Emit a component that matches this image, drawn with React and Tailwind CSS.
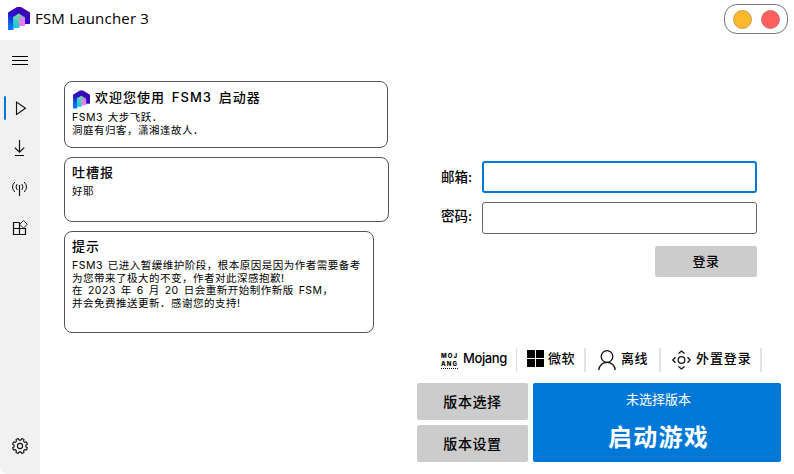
import React from "react";

const hand = "font-['Inter','Noto_Sans_CJK_SC',sans-serif]";

function Logo({ className, id }) {
  return (
    <svg viewBox="0 0 22 23" className={className}>
      <defs>
        <linearGradient id={id + "a"} x1="0" y1="1" x2="0.6" y2="0.1">
          <stop offset="0" stopColor="#0080ff" />
          <stop offset="0.25" stopColor="#0868f4" />
          <stop offset="0.6" stopColor="#2a10cc" />
          <stop offset="1" stopColor="#3d00b4" />
        </linearGradient>
        <linearGradient id={id + "b"} x1="0" y1="1" x2="0.3" y2="0">
          <stop offset="0" stopColor="#08c4e4" />
          <stop offset="0.5" stopColor="#38ccc8" />
          <stop offset="1" stopColor="#78dc9c" />
        </linearGradient>
        <linearGradient id={id + "c"} x1="0" y1="0" x2="0.2" y2="1">
          <stop offset="0" stopColor="#78d0a8" />
          <stop offset="0.35" stopColor="#a0a8c8" />
          <stop offset="0.65" stopColor="#e880f0" />
          <stop offset="1" stopColor="#ff78f0" />
        </linearGradient>
      </defs>
      <path d="M0 5.500 9 0H13L22 5.500V17H16V11H5.500V23H0Z" fill={`url(#${id}a)`} />
      <path d="M5 10 11 6.500 11.500 7V21H5Z" fill={`url(#${id}b)`} />
      <path d="M11 6.500 17 10.500V19H11Z" fill={`url(#${id}c)`} />
    </svg>
  );
}

function Icon({ children, className }) {
  return (
    <svg viewBox="0 0 20 20" fill="none" stroke="#111" strokeWidth="1.1" className={className}>
      {children}
    </svg>
  );
}

function Gear() {
  const points = [];
  for (let i = 0; i < 8; i++) {
    for (const [offset, radius] of [[-15, 5.9], [-9, 7.6], [9, 7.6], [15, 5.9]]) {
      const angle = ((i * 45 + 22.5 + offset) * Math.PI) / 180;
      points.push(`${10 + radius * Math.cos(angle)},${10 + radius * Math.sin(angle)}`);
    }
  }
  return (
    <Icon className="h-5 w-5">
      <polygon points={points.join(" ")} strokeLinejoin="round" />
      <circle cx="10" cy="10" r="2.6" />
    </Icon>
  );
}

function Sidebar() {
  return (
    <aside className="flex w-10 flex-col items-center rounded-bl-lg bg-[#f1f1f1] pt-[10px] pb-[18px]">
      <Icon className="h-5 w-5">
        <path d="M2 6.5H18M2 10.5H18M2 14.5H18" stroke="#000" strokeWidth="1" />
      </Icon>
      <div className="mt-[26px] flex h-6 w-full items-center pl-1">
        <span className="h-6 w-[2px] rounded bg-[#0078d7]" />
        <Icon className="ml-1 h-5 w-5">
          <path d="M6.5 4V16.5L15.5 10.2Z" />
        </Icon>
      </div>
      <Icon className="mt-[18px] h-5 w-5">
        <path d="M9.5 2V14M4.8 9.6 9.5 14.2 14.2 9.6M5 17.5H14" strokeWidth="1.2" />
      </Icon>
      <Icon className="mt-5 h-5 w-5">
        <path d="M9.5 7V18" strokeWidth="1.2" />
        <path d="M7.200 6Q4.800 9 7.200 12M11.800 6Q14.200 9 11.800 12M4.800 4Q.200 9 4.800 14M14.200 4Q18.800 9 14.200 14" strokeWidth="1" />
      </Icon>
      <Icon className="mt-5 h-5 w-5">
        <path d="M9.500 4.500H3.500V16.500H15.500V10.500H3.500M9.500 4.500V16.500" strokeWidth="1.2" />
        <path d="M13.500 2.500 17.300 6.300 13.500 10.100 9.700 6.300Z" fill="#f1f1f1" strokeWidth=".9" />
      </Icon>
      <div className="mt-auto">
        <Gear />
      </div>
    </aside>
  );
}

function Card({ className, title, icon, children }) {
  return (
    <section className={`rounded-lg border border-[#555] pl-[7px] ${className}`}>
      <h2 className="flex h-[28px] items-center text-[13px] font-medium leading-none tracking-[1px] [word-spacing:2.4px] whitespace-pre">
        {icon}
        {title}
      </h2>
      <div className="text-[10.5px] leading-[12.6px] tracking-[0.5px] [word-spacing:1.5px] whitespace-pre">{children}</div>
    </section>
  );
}

function Field({ label, focused }) {
  return (
    <label className="flex h-8 items-center">
      <span className={`w-[41px] text-[13.5px] font-medium whitespace-nowrap ${focused ? "pt-px" : "pb-[3px]"}`}>{label}</span>
      <input
        className={`h-8 w-[275px] rounded-[3px] bg-white outline-none ${
          focused ? "border-2 border-[#0078d7]" : "border border-[#666]"
        }`}
      />
    </label>
  );
}

function AccountTypes() {
  return (
    <nav className="flex h-6 items-center text-[13px] font-medium leading-6 whitespace-nowrap">
      <div className="flex w-[75px] items-center">
        <span className="flex w-[17px] flex-col border-b border-dotted border-black text-[6px] font-extrabold">
          <span className="h-[8px] leading-[8px] tracking-[1.1px]">MOJ</span>
          <span className="h-[8px] leading-[8px] tracking-[1.1px]">ANG</span>
        </span>
        <span className="-mt-1 ml-[5px] tracking-[-0.4px]">Mojang</span>
      </div>
      <i className="h-6 w-px bg-[#ddd]" />
      <div className="flex w-[67px] items-center pl-[10px]">
        <svg viewBox="0 0 17 17" className="-mt-1 h-[17px] w-[17px]">
          <path d="M0 0H8V8H0ZM9 0H17V8H9ZM0 9H8V17H0ZM9 9H17V17H9Z" fill="#000" />
        </svg>
        <span className="-mt-1 ml-1 tracking-[0.5px]">微软</span>
      </div>
      <i className="h-6 w-[2px] bg-[#e2e2e2]" />
      <div className="flex w-[73px] items-center pl-3">
        <svg viewBox="0 0 18 20" fill="none" stroke="#111" strokeWidth="1.3" className="h-5 w-[18px]">
          <circle cx="9" cy="6.5" r="5.8" />
          <path d="M.8 20C1 15.500 4.500 12.300 9 12.300S17 15.500 17.200 20" />
        </svg>
        <span className="-mt-1 ml-[5px] tracking-[0.5px]">离线</span>
      </div>
      <i className="h-6 w-[2px] bg-[#e2e2e2]" />
      <div className="flex w-[99px] items-center pl-[10px]">
        <Icon className="h-5 w-5">
          <circle cx="10.500" cy="10" r="3.300" strokeWidth="1.300" />
          <path d="M7.500 3.500 10.500 1 13.500 3.500M7.500 16.500 10.500 19 13.500 16.500M4.500 7.200 1.800 10 4.500 12.800M16.500 7.200 19.200 10 16.500 12.800" strokeWidth="1.300" />
        </Icon>
        <span className="-mt-1 ml-[5px] tracking-[0.9px]">外置登录</span>
      </div>
      <i className="h-6 w-[2px] bg-[#e2e2e2]" />
    </nav>
  );
}

export default function App() {
  return (
    <div className={`flex h-[474px] w-[794px] flex-col overflow-hidden bg-white text-black ${hand}`}>
      <header className="flex h-10 shrink-0 items-start justify-between">
        <div className="flex pt-[7px] pl-2">
          <Logo id="top" className="h-[23px] w-[22px]" />
          <h1 className="ml-[5px] font-['Open_Sans',sans-serif] text-[15px] leading-[23px] tracking-[0.2px] whitespace-nowrap">
            FSM Launcher 3
          </h1>
        </div>
        <div className="mt-1 mr-[6px] flex h-[30px] w-16 items-center justify-center gap-[9px] rounded-[13px] border border-[#777]">
          <span className="h-[19px] w-[19px] rounded-full border border-[#c9a050] bg-[#ffb92a]" />
          <span className="h-[19px] w-[19px] rounded-full border border-[#d07070] bg-[#ff5f5c]" />
        </div>
      </header>
      <div className="flex flex-1">
        <Sidebar />
        <main className="flex flex-1">
          <div className="flex w-[377px] flex-col pt-[41px] pl-6">
            <Card
              className="h-[67px] w-[324px] pt-px"
              icon={<Logo id="card" className="mt-[5px] mr-[5px] ml-px h-[19px] w-[17px]" />}
              title={"欢迎您使用 FSM3 启动器"}
            >
              <p className="pt-px">{"FSM3 大步飞跃．"}</p>
              <p>洞庭有归客，潇湘逢故人．</p>
            </Card>
            <Card className="mt-[9px] h-[65px] w-[325px]" title="吐槽报">
              <p>好耶</p>
            </Card>
            <Card className="mt-[9px] h-[102px] w-[310px]" title="提示">
              <p>FSM3 已进入暂缓维护阶段，根本原因是因为作者需要备考</p>
              <p>为您带来了极大的不变，作者对此深感抱歉!</p>
              <p>在 2023 年 6 月 20 日会重新开始制作新版 FSM，</p>
              <p>并会免费推送更新．感谢您的支持!</p>
            </Card>
          </div>
          <div className="flex flex-col pt-[121px]">
            <div className="flex w-[340px] flex-col gap-[9px] pl-6">
              <Field label="邮箱:" focused />
              <Field label="密码:" />
              <button className="mt-[3px] h-[31px] w-[102px] self-end rounded-[2px] bg-[#ccc] text-[13px] font-medium tracking-[0.5px]">
                登录
              </button>
            </div>
            <div className="mt-[71px] pl-6">
              <AccountTypes />
            </div>
            <div className="mt-[11px] flex gap-[5px]">
              <div className="flex flex-col gap-[5px] text-[14px] font-medium tracking-[0.6px]">
                <button className="h-[37px] w-[111px] rounded-[2px] bg-[#ccc]">版本选择</button>
                <button className="h-[37px] w-[111px] rounded-[2px] bg-[#ccc]">版本设置</button>
              </div>
              <button className="flex h-[79px] w-[248px] flex-col items-center rounded-[2px] bg-[#0078d7] pt-[6px] text-white">
                <span className="pl-[3px] text-[13px] leading-5">未选择版本</span>
                <span className="mt-[11px] pl-[3px] text-[24px] leading-9 font-bold tracking-[1.2px]">启动游戏</span>
              </button>
            </div>
          </div>
        </main>
      </div>
    </div>
  );
}
